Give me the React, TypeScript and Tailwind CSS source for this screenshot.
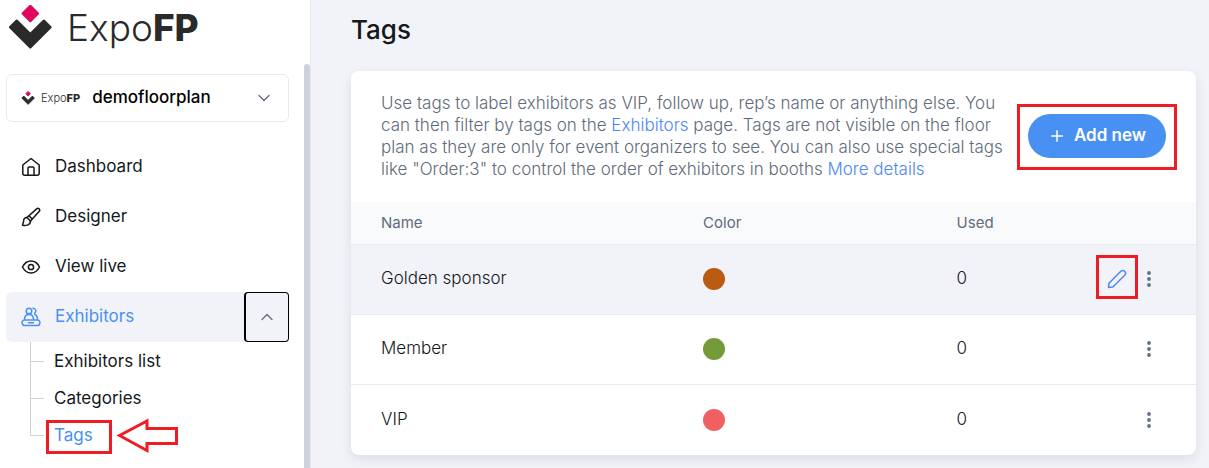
import React, { useState } from 'react';
import { ChevronDown, ChevronUp, Plus } from 'lucide-react';

interface Tag {
  id: number;
  name: string;
  color: string;
  used: number;
}

const tags: Tag[] = [
  { id: 1, name: 'Golden sponsor', color: '#b95c11', used: 0 },
  { id: 2, name: 'Member', color: '#749a3a', used: 0 },
  { id: 3, name: 'VIP', color: '#f06063', used: 0 },
];

const LogoMark: React.FC<{ className?: string }> = ({ className }) => (
  <svg viewBox="0 0 44 44" className={className} aria-hidden="true">
    <path d="M22.300 1.300 L29.500 8.500 L22.300 15.700 L15.100 8.500 Z" fill="#e0085c" stroke="#e0085c" strokeWidth="3" strokeLinejoin="round" />
    <path d="M8.700 16 L22.300 29.600 L35.900 16 L42.100 22.200 L22.300 42 L2.500 22.200 Z" fill="#2a2a2a" stroke="#2a2a2a" strokeWidth="3" strokeLinejoin="round" />
  </svg>
);

const HomeIcon = () => (
  <svg viewBox="0 0 20 20" className="w-5 h-5" fill="none" stroke="currentColor" strokeWidth="1.500" strokeLinejoin="round">
    <path d="M1.800 8 L10 1.500 L18.200 8 V16.200 a2 2 0 0 1 -2 2 H3.800 a2 2 0 0 1 -2 -2 Z" />
    <path d="M7 18 V11 a1 1 0 0 1 1 -1 h4 a1 1 0 0 1 1 1 V18" />
  </svg>
);

const BrushIcon = () => (
  <svg viewBox="0 0 20 20" className="w-5 h-5" fill="none" stroke="currentColor" strokeWidth="1.500" strokeLinecap="round" strokeLinejoin="round">
    <path d="M6 10.500 L15.600 1.900 a1.700 1.700 0 0 1 2.500 2.500 L9.500 14" />
    <path d="M6 10.500 L9.500 14 M8 8.700 L11.200 12" />
    <path d="M6 10.500 C3.500 10.500 2.600 12 2.600 14 C2.600 16 1.500 17 1.500 18.300 C4 18.800 9.500 18.800 9.500 14" />
  </svg>
);

const EyeIcon = () => (
  <svg viewBox="0 0 20 20" className="w-5 h-5" fill="none" stroke="currentColor" strokeWidth="1.500" strokeLinejoin="round">
    <path d="M1.500 10 C3.500 6 6.500 4 10 4 C13.500 4 16.500 6 18.500 10 C16.500 14 13.500 16 10 16 C6.500 16 3.500 14 1.500 10 Z" />
    <circle cx="10" cy="10" r="2.600" />
  </svg>
);

const ExhibitorsIcon = () => (
  <svg viewBox="0 0 20 20" className="w-5 h-5" fill="none" stroke="currentColor" strokeWidth="1.500" strokeLinecap="round" strokeLinejoin="round">
    <circle cx="8" cy="4" r="2.800" />
    <path d="M12 1.200 a2.800 2.800 0 0 1 1.500 5.200" />
    <path d="M3.500 12.500 C3.500 9.500 4.500 7.500 8 7.500 C11.500 7.500 12.500 9.500 12.500 12.500" />
    <path d="M13.800 7.500 C16 8.200 16.500 10 16.500 12.500" />
    <path d="M3.500 13 H16.500 a2.600 2.600 0 0 1 2 4 a2 2 0 0 1 -2 1.600 H3.500 a2 2 0 0 1 -2 -1.600 a2.600 2.600 0 0 1 2 -4 Z" />
    <path d="M7.500 15.800 H12.500" />
  </svg>
);

const PencilIcon = () => (
  <svg viewBox="0 0 20 20" className="w-5 h-5" fill="none" stroke="currentColor" strokeWidth="1.500" strokeLinejoin="round">
    <path d="M1.500 18.500 L2 14.200 L13.800 2.300 a2.700 2.700 0 0 1 3.900 3.900 L5.800 18 Z" />
  </svg>
);

const DotsIcon = () => (
  <svg viewBox="0 0 4 16" className="w-1 h-4" fill="currentColor">
    <circle cx="2" cy="2" r="1.900" />
    <circle cx="2" cy="8" r="1.900" />
    <circle cx="2" cy="14" r="1.900" />
  </svg>
);

const navItems = [
  { label: 'Dashboard', icon: <HomeIcon /> },
  { label: 'Designer', icon: <BrushIcon /> },
  { label: 'View live', icon: <EyeIcon /> },
];

const subItems = ['Exhibitors list', 'Categories', 'Tags'];

const Sidebar: React.FC = () => {
  const [open, setOpen] = useState(true);

  return (
    <aside className="w-[311px] shrink-0 flex flex-col bg-white border-r border-[#e8eaef]">
      <a href="#" className="flex items-center gap-[15px] h-16 pl-2 pb-2.5 text-[#2a2a2a]">
        <LogoMark className="w-11 h-11" />
        <span className="text-[37px] leading-none font-light">
          Expo<b className="font-extrabold">FP</b>
        </span>
      </a>

      <div className="flex-1 flex">
        <div className="flex-1 pl-1.5 pr-[15px] pt-2.5">
          {/* Event picker */}
          <button className="w-full h-12 flex items-center px-3.5 border border-[#e8eaef] rounded-md">
            <LogoMark className="w-3.5 h-3.5" />
            <span className="ml-1.5 text-[11px] font-light text-[#2a2a2a]">
              Expo<b className="font-extrabold">FP</b>
            </span>
            <span className="ml-3 text-[17px] font-medium text-black">demofloorplan</span>
            <ChevronDown className="ml-auto w-5 h-5 text-[#6b7685]" strokeWidth={1.8} />
          </button>

          <nav className="mt-5 text-[17px] text-[#15181c]">
            {navItems.map(item => (
              <a key={item.label} href="#" className="h-[50px] flex items-center gap-3.5 pl-[15px]">
                {item.icon}
                {item.label}
              </a>
            ))}

            <div className="h-[50px] flex items-center rounded-md bg-[#f2f3f8]">
              <a href="#" className="flex-1 flex items-center gap-3.5 pl-[15px] text-[#4891f2]">
                <ExhibitorsIcon />
                Exhibitors
              </a>
              <button
                onClick={() => setOpen(!open)}
                aria-label="Toggle exhibitors menu"
                aria-expanded={open}
                className="w-[45px] h-[50px] flex items-center justify-center border border-l-2 border-black rounded-sm text-[#6b7685]"
              >
                <ChevronUp className="w-5 h-5" strokeWidth={1.8} />
              </button>
            </div>

            {open && (
              <ul className="ml-6">
                {subItems.map((label, i) => (
                  <li key={label} className="h-[37px] flex">
                    {/* Tree branch */}
                    <div className={i === subItems.length - 1 ? 'w-3.5 h-5 border-l border-b border-[#cdd2dd]' : 'w-3.5 border-l border-[#cdd2dd]'}>
                      {i < subItems.length - 1 && <div className="h-5 border-b border-[#cdd2dd]" />}
                    </div>
                    <div className="relative flex items-center pl-2.5 pt-0.5">
                      <a href="#" className={label === 'Tags' ? 'text-[#4891f2]' : ''}>
                        {label}
                      </a>
                      {label === 'Tags' && (
                        <>
                          <span className="absolute left-0.5 top-1 w-[66px] h-[34px] border-3 border-[#ee1c25]" />
                          <svg viewBox="0 0 62 36" className="absolute left-[73px] top-0.5 w-[62px] h-9" fill="none" stroke="#ee1c25" strokeWidth="3">
                            <path d="M2.500 17.500 L30 3 V10.500 H59.500 V25.500 H30 V32.500 Z" />
                          </svg>
                        </>
                      )}
                    </div>
                  </li>
                ))}
              </ul>
            )}
          </nav>
        </div>
        {/* Scroll thumb */}
        <div className="w-1.5 rounded-t-sm bg-[#cdd2dd]" />
      </div>
    </aside>
  );
};

const App: React.FC = () => {
  return (
    <div className="min-h-screen flex bg-[#f2f3f8] font-['Inter',sans-serif]">
      <Sidebar />

      <main className="flex-1 min-w-0 pl-10 pr-[13px] pt-3">
        <h1 className="text-[26px] leading-9 font-medium text-[#15181c]">Tags</h1>

        <section className="mt-[23px] bg-white rounded-lg overflow-hidden shadow-[0_4px_12px_rgba(30,40,70,0.1)]">
          {/* Description */}
          <div className="flex items-center gap-6 px-[30px] pt-[21px] pb-[22px]">
            <p className="flex-1 text-[17px] leading-[22px] font-light text-[#5f6b7a]">
              Use tags to label exhibitors as VIP, follow up, rep’s name or anything else. You can then filter by tags on the{' '}
              <a href="#" className="text-[#4d86f5]">Exhibitors</a> page. Tags are not visible on the floor plan as they are only
              for event organizers to see. You can also use special tags like "Order:3" to control the order of exhibitors in
              booths <a href="#" className="text-[#4d86f5]">More details</a>
            </p>
            <div className="relative">
              <button className="h-11 w-[138px] flex items-center justify-center gap-2 rounded-full bg-[#4891f2] text-[17px] font-semibold text-white">
                <Plus className="w-[18px] h-[18px]" strokeWidth={2} />
                Add new
              </button>
              <span className="absolute -inset-x-[11px] -top-2.5 -bottom-3 pointer-events-none border-3 border-[#ee1c25]" />
            </div>
          </div>

          <table className="w-full table-fixed text-left">
            <thead>
              <tr className="h-[42px] bg-[#f9fafc] border-b border-[#e8eaef] text-[15px] text-[#5f6b7a]">
                <th className="w-5/12 pl-[30px] font-normal">Name</th>
                <th className="w-[30%] font-normal">Color</th>
                <th className="font-normal">Used</th>
                <th aria-label="Actions" />
              </tr>
            </thead>
            <tbody>
              {tags.map((tag, i) => (
                <tr
                  key={tag.id}
                  className={`h-[70px] last:h-[71px] border-b border-[#e8eaef] last:border-b-0 text-[17px] font-light text-[#15181c] ${i === 0 ? 'bg-[#f2f3f8]' : ''}`}
                >
                  <td className="pl-[30px]">{tag.name}</td>
                  <td>
                    <span className="block w-[22px] h-[22px] rounded-full" style={{ backgroundColor: tag.color }} />
                  </td>
                  <td>{tag.used}</td>
                  <td className="pr-[45px]">
                    <div className="flex items-center justify-end gap-5">
                      {i === 0 && (
                        <button aria-label="Edit tag" className="relative text-[#4d86f5]">
                          <PencilIcon />
                          <span className="absolute -inset-x-[11px] -top-3.5 -bottom-2.5 border-3 border-[#ee1c25]" />
                        </button>
                      )}
                      <button aria-label="More actions" className="text-[#5f7186]">
                        <DotsIcon />
                      </button>
                    </div>
                  </td>
                </tr>
              ))}
            </tbody>
          </table>
        </section>
      </main>
    </div>
  );
};

export default App;
